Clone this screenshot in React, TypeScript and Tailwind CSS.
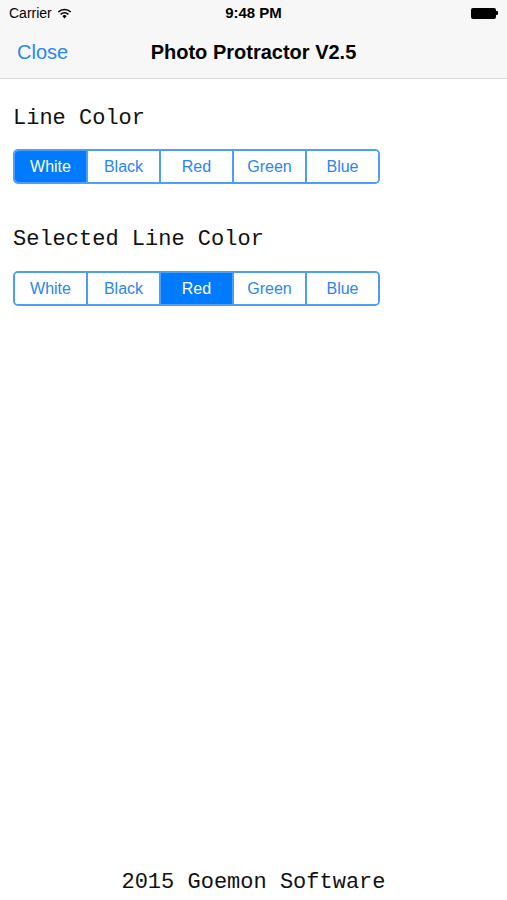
import React, { useState } from 'react';

const colors = ['White', 'Black', 'Red', 'Green', 'Blue'];

function Segmented({ value, onChange }: { value: number; onChange: (i: number) => void }) {
  return (
    <div className="flex w-[367px] h-[35px] rounded-[5px] border-2 border-[#4d9ef7] overflow-hidden">
      {colors.map((c, i) => (
        <button
          key={c}
          onClick={() => onChange(i)}
          className={`flex-1 flex items-center justify-center text-[16px] ${
            i > 0 ? 'border-l-2 border-[#4d9ef7]' : ''
          } ${i === value ? 'bg-[#007aff] text-white' : 'bg-white text-[#2a86f5]'}`}
        >
          {c}
        </button>
      ))}
    </div>
  );
}

export default function App() {
  const [line, setLine] = useState(0);
  const [selected, setSelected] = useState(2);

  return (
    <div className="h-[900px] flex flex-col bg-white font-['Liberation_Sans',Arial,sans-serif]">
      {/* status bar */}
      <div className="h-[26px] bg-[#f7f7f7] flex items-center px-[9px] relative text-[14px] text-black">
        <div className="flex items-center gap-[5px]">
          <span>Carrier</span>
          <svg width="15" height="11" viewBox="0 0 15 11">
            <path d="M7.5 10.5 L5.3 8.1 A3.2 3.2 0 0 1 9.7 8.1 Z" fill="#000" />
            <path d="M3.6 6.4 A5.6 5.6 0 0 1 11.4 6.4" stroke="#000" strokeWidth="1.6" fill="none" />
            <path d="M1.3 4.0 A8.8 8.8 0 0 1 13.7 4.0" stroke="#000" strokeWidth="1.6" fill="none" />
          </svg>
        </div>
        <div className="absolute left-0 right-0 text-center font-semibold text-[15px]">9:48 PM</div>
        <div className="ml-auto flex items-center">
          <div className="w-[25px] h-[11px] bg-black rounded-[2px]" />
          <div className="w-[2px] h-[4px] bg-black rounded-r-[1px]" />
        </div>
      </div>

      {/* nav bar */}
      <div className="h-[53px] bg-[#f7f7f7] border-b border-[#d9d9d9] flex items-center relative">
        <button className="pl-[17px] text-[20px] text-[#2a86f5] z-10">Close</button>
        <div className="absolute left-0 right-0 text-center text-[20px] font-bold text-black">
          Photo Protractor V2.5
        </div>
      </div>

      {/* content */}
      <div className="flex-1 flex flex-col px-[13px] font-['Liberation_Mono','Courier_New',monospace] text-[22px] text-[#111]">
        <div className="mt-[27px] leading-[26px]">Line Color</div>
        <div className="mt-[17px] font-['Liberation_Sans',Arial,sans-serif]">
          <Segmented value={line} onChange={setLine} />
        </div>
        <div className="mt-[43px] leading-[26px]">Selected Line Color</div>
        <div className="mt-[18px] font-['Liberation_Sans',Arial,sans-serif]">
          <Segmented value={selected} onChange={setSelected} />
        </div>
        <div className="mt-auto mb-[4px] text-center leading-[26px]">2015 Goemon Software</div>
      </div>
    </div>
  );
}
